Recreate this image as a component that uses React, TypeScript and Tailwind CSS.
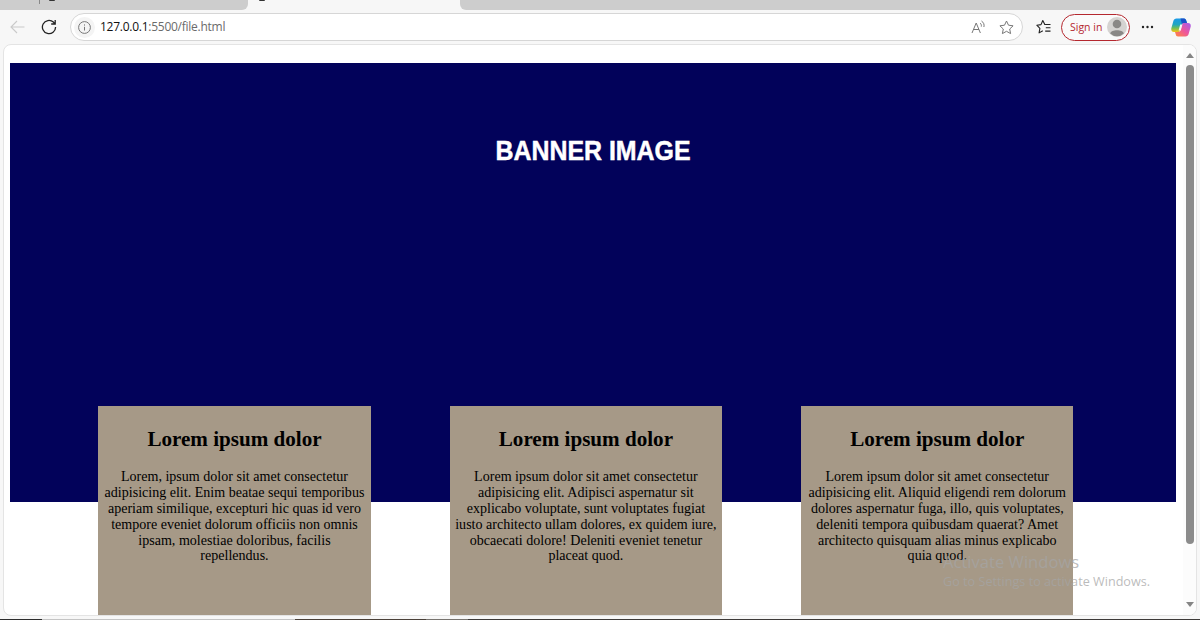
import React from 'react';

const cards = [
  {
    title: 'Lorem ipsum dolor',
    lines: [
      'Lorem, ipsum dolor sit amet consectetur',
      'adipisicing elit. Enim beatae sequi temporibus',
      'aperiam similique, excepturi hic quas id vero',
      'tempore eveniet dolorum officiis non omnis',
      'ipsam, molestiae doloribus, facilis',
      'repellendus.',
    ],
  },
  {
    title: 'Lorem ipsum dolor',
    lines: [
      'Lorem ipsum dolor sit amet consectetur',
      'adipisicing elit. Adipisci aspernatur sit',
      'explicabo voluptate, sunt voluptates fugiat',
      'iusto architecto ullam dolores, ex quidem iure,',
      'obcaecati dolore! Deleniti eveniet tenetur',
      'placeat quod.',
    ],
  },
  {
    title: 'Lorem ipsum dolor',
    lines: [
      'Lorem ipsum dolor sit amet consectetur',
      'adipisicing elit. Aliquid eligendi rem dolorum',
      'dolores aspernatur fuga, illo, quis voluptates,',
      'deleniti tempora quibusdam quaerat? Amet',
      'architecto quisquam alias minus explicabo',
      'quia quod.',
    ],
  },
];

const STAR = 'M7.5 1l2 4.200 4.600.600-3.400 3.200.900 4.600-4.100-2.300-4.100 2.300.900-4.600L.900 5.800l4.600-.600z';

const TabStrip: React.FC = () => (
  <div className="flex h-[10px] bg-[#f7f7f7]">
    <div className="relative w-[248px] h-[9.5px] rounded-br-[6px] bg-[#cdcdcd]">
      <div className="absolute left-[39px] top-0 w-px h-[4px] bg-[#888]" />
      <div className="absolute left-[49px] top-0 w-[6px] h-px rounded-b bg-[#333]" />
    </div>
    <div className="relative w-[212px]">
      <div className="absolute left-[11px] top-0 w-[6px] h-px rounded-b bg-[#333]" />
    </div>
    <div className="flex-1 h-[9.5px] rounded-bl-[6px] bg-[#cdcdcd]" />
  </div>
);

const Toolbar: React.FC = () => (
  <div className="flex items-center h-[34px] bg-[#f7f7f7] font-['Open_Sans',sans-serif]">
    <svg className="ml-[10px] shrink-0" width="15" height="14" viewBox="0 0 15 14" fill="none" stroke="#cacaca" strokeWidth="1.1">
      <path d="M14.5 7H1M7 1L1 7l6 6" />
    </svg>
    <svg className="ml-[16px] shrink-0" width="16" height="16" viewBox="0 0 16 16" fill="none" stroke="#222" strokeWidth="1.3">
      <path d="M14.6 8a6.6 6.6 0 1 1-2.2-4.9L14 4.8M14.2 1v4h-4" />
    </svg>

    {/* Address bar */}
    <div className="ml-[13px] flex items-center w-[953px] h-[28px] rounded-full border border-[#d6d6d6] bg-white">
      <div className="ml-[3px] flex items-center justify-center w-[21px] h-[21px] rounded-full bg-[#f4f4f4]">
        <svg width="13" height="13" viewBox="0 0 13 13" fill="none" stroke="#777" strokeWidth="1">
          <circle cx="6.5" cy="6.5" r="5.9" />
          <path d="M6.5 5.8v3.7M6.5 3.4v1.2" />
        </svg>
      </div>
      <div className="ml-[5px] w-[126px] text-[12px] tracking-[-0.26px] leading-none whitespace-nowrap text-[#6b6b6b]">
        <span className="text-[#111]">127.0.0.1</span>:5500/file.html
      </div>
      <svg className="ml-auto mr-[13px]" width="15" height="15" viewBox="0 0 15 15" fill="none" stroke="#777" strokeWidth="1">
        <path d="M1 13L5.2 3l4.2 10M2.500 9.500H8M9 3c1.200.9 1.600 2.200 1.300 3.600M10.500 1c2.200 1.500 3 3.600 2.400 6" />
      </svg>
      <svg className="mr-[8px]" width="15" height="15" viewBox="0 0 15 15" fill="none" stroke="#777" strokeWidth="1" strokeLinejoin="round">
        <path d={STAR} />
      </svg>
    </div>

    <svg className="ml-[13px] shrink-0" width="16" height="16" viewBox="0 0 16 16" fill="none" stroke="#222" strokeWidth="1.1" strokeLinejoin="round">
      <path d="M8.800 5.500L6.800 1.500 5 5.600.800 6.200l3.100 3.100-.800 4.600 3.700-2.200M8.200 5.500h6.300M9.800 8.800h4.700M9.200 12.100h5.300" />
    </svg>
    <div className="ml-[9px] flex items-center w-[69px] h-[27px] rounded-full border border-[#b5282f] bg-[#fafafa] text-[#b5282f]">
      <span className="ml-[8px] w-[32px] text-[10.5px] leading-none whitespace-nowrap">Sign in</span>
      <svg className="ml-[5px] shrink-0" width="20" height="20" viewBox="0 0 20 20">
        <circle cx="10" cy="10" r="10" fill="#d5d3d1" />
        <circle cx="10" cy="7" r="4.300" fill="#8a8886" />
        <path d="M3.200 16.400c.8-4.200 12.800-4.200 13.600 0A9.700 9.700 0 0 1 3.200 16.400z" fill="#8a8886" />
      </svg>
    </div>
    <svg className="ml-[11px] shrink-0" width="13" height="4" viewBox="0 0 13 4" fill="#222">
      <circle cx="2" cy="2" r="1.200" />
      <circle cx="6.500" cy="2" r="1.200" />
      <circle cx="11" cy="2" r="1.200" />
    </svg>
    <svg className="ml-[17px] shrink-0" width="20" height="19" viewBox="0 0 20 19">
      <defs>
        <linearGradient id="cool" x1="0" y1="0" x2="0" y2="1">
          <stop offset="0" stopColor="#1a9ae8" />
          <stop offset=".45" stopColor="#22a6c0" />
          <stop offset=".7" stopColor="#6dbd5a" />
          <stop offset="1" stopColor="#f5c614" />
        </linearGradient>
        <linearGradient id="warm" x1="1" y1="0" x2="0" y2="1">
          <stop offset="0" stopColor="#a35cf0" />
          <stop offset=".5" stopColor="#ee559c" />
          <stop offset="1" stopColor="#ff8a3c" />
        </linearGradient>
      </defs>
      <path d="M5.500.5H13c1.500 0 1.900 1 2.300 2.300L16 5h-2.500c-1.500 0-2.200.8-2.600 2.200L9 12.500c-.4 1-1 1.500-2 1.500H3C.7 14-.2 12.300.4 10L2.300 3.200C2.800 1.400 3.800.5 5.500.5z" fill="url(#cool)" />
      <path d="M9.500.5H13c1.500 0 1.900 1 2.300 2.300L16 5h-3c-1 0-1.700.4-2.100 1.100z" fill="#1c50c8" />
      <path d="M14.500 18.500H7c-1.500 0-1.900-1-2.300-2.300L4 14h3c1.500 0 2.200-.8 2.600-2.200L11.300 6c.3-.9.800-1 1.700-1h4c2.300 0 3.200 1.700 2.600 4l-1.900 6.800c-.5 1.800-1.500 2.700-3.200 2.700z" fill="url(#warm)" />
      <path d="M9.200 6.500h2.200L9.800 12.500H7.600z" fill="#f7f7f7" />
    </svg>
  </div>
);

const Scrollbar: React.FC = () => (
  <div className="flex flex-col items-center w-[14px] h-full pt-[8px] pb-[8px] bg-[#fcfcfc]">
    <svg width="8" height="5" viewBox="0 0 8 5" fill="#858585">
      <path d="M4 0l4 5H0z" />
    </svg>
    <div className="mt-[7px] w-[8px] h-[479px] rounded-full bg-[#8b8b8b]" />
    <svg className="mt-auto" width="8" height="5" viewBox="0 0 8 5" fill="#858585">
      <path d="M4 5L0 0h8z" />
    </svg>
  </div>
);

const App: React.FC = () => {
  return (
    <div className="relative flex flex-col w-[1200px] h-[620px] overflow-hidden bg-[#f7f7f7]">
      <TabStrip />
      <Toolbar />

      {/* Page viewport */}
      <div className="flex ml-[3px] w-[1194px] h-[572px] overflow-hidden rounded-[8px] border border-[#e4e4e4] bg-white">
        <div className="w-[1179px] shrink-0 font-['Liberation_Serif',serif] text-black">
          <div className="mt-[18.4px] ml-[6.4px] w-[1166px] h-[439px] pt-[71px] bg-[#02025a] text-center">
            <h1 className="scale-x-[0.89] font-['Liberation_Sans',sans-serif] text-[28px] leading-[34px] font-bold text-white [-webkit-text-stroke:0.5px_white]">
              BANNER IMAGE
            </h1>
          </div>
          <div className="relative -mt-[96.6px] ml-[94.3px] flex gap-[79px]">
            {cards.map((card, i) => (
              <div key={i} className="w-[272.4px] h-[214px] shrink-0 bg-[#a69987] text-center whitespace-nowrap">
                <h2 className="mt-[21.4px] text-[21.1px] leading-[24px] font-bold">{card.title}</h2>
                <div className="mt-[18px] text-[14.05px] leading-[15.85px]">
                  {card.lines.map((line) => (
                    <p key={line} className="flex justify-center">{line}</p>
                  ))}
                </div>
              </div>
            ))}
          </div>
        </div>
        <Scrollbar />
      </div>

      {/* Desktop edge under the window */}
      <div className="mt-auto flex h-px">
        <div className="w-[42px] bg-[#2c2c2c]" />
        <div className="w-[253px] bg-[#c4c4c4]" />
        <div className="w-[131px] bg-[#4a4038]" />
        <div className="w-[42px] bg-[#77736e]" />
        <div className="flex-1 bg-[#3d3a38]" />
      </div>

      {/* Activation watermark */}
      <div className="absolute left-[943px] top-[551px] font-['Open_Sans',sans-serif] text-[#a5a5a5]/75 whitespace-nowrap">
        <div className="text-[16.6px] leading-[21px]">Activate Windows</div>
        <div className="text-[12.65px] leading-[18px]">Go to Settings to activate Windows.</div>
      </div>
    </div>
  );
};

export default App;
